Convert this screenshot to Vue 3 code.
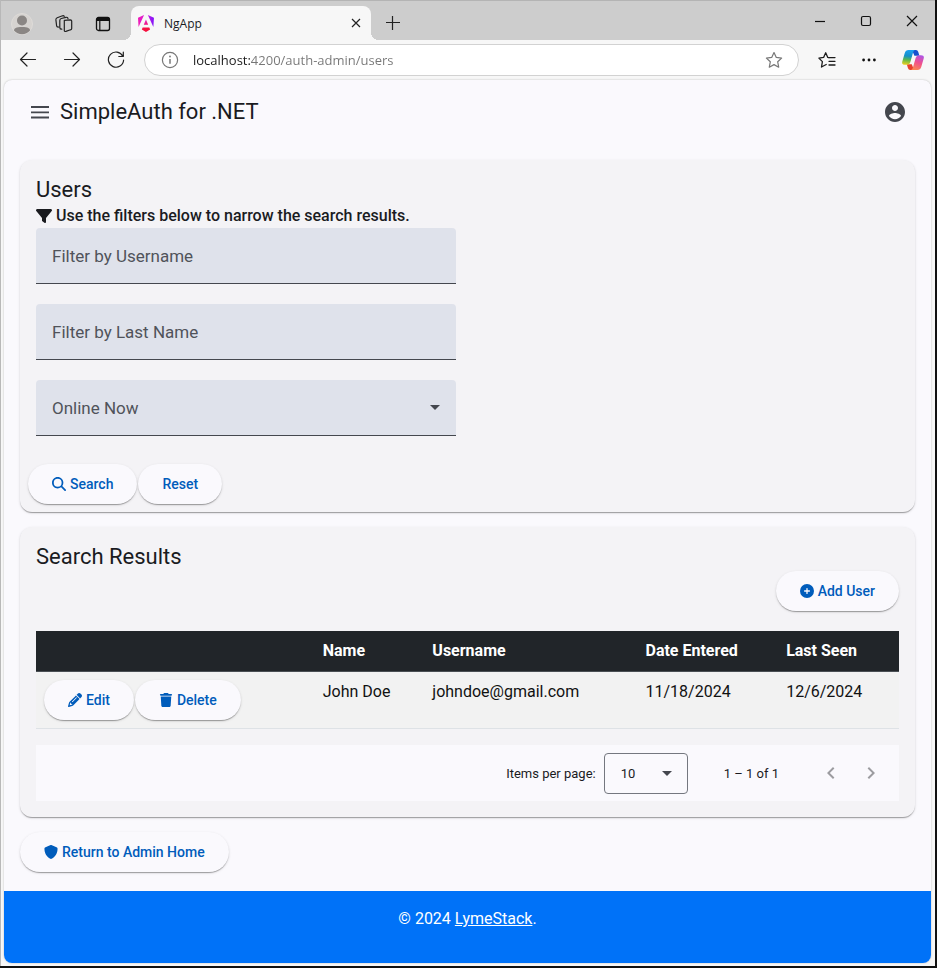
<script setup>
import { ref } from 'vue'

const url = ref('localhost:4200/auth-admin/users')
const username = ref('')
const lastName = ref('')
const online = ref('')
const pageSize = ref(10)

const users = [
  { name: 'John Doe', username: 'johndoe@gmail.com', entered: '11/18/2024', seen: '12/6/2024' },
]

function reset() {
  username.value = ''
  lastName.value = ''
  online.value = ''
}
</script>

<template>
  <div class="window">
    <header class="tabstrip">
      <div class="strip-tools">
        <button class="chrome-btn" aria-label="Profile">
          <svg width="22" height="22" viewBox="0 0 22 22">
            <circle cx="11" cy="11" r="10.5" fill="#d6d3d0" stroke="#dedbd8" />
            <circle cx="11" cy="7.5" r="5" fill="#8a8684" />
            <path d="M3 17.5c0-2.4 2-3.6 8-3.6s8 1.200 8 3.600a10.500 10.500 0 0 1-16 0z" fill="#8a8684" />
          </svg>
        </button>
        <button class="chrome-btn" aria-label="Workspaces">
          <svg width="18" height="18" viewBox="0 0 18 18" fill="none" stroke="#222" stroke-width="1.200" stroke-linejoin="round" stroke-linecap="round">
            <path d="M9.300 5.300l6-.5q1.400 0 1.400 1.300v7.400q0 1.100-1.200 1.300l-4.600 1.600q-1.600.4-1.600-1.200V6.600q0-1.100 0-1.300z" />
            <path d="M6.800 14.200q-1.900.1-2-1.600V5.500q0-1.600 1.400-2L11 2.300q1.800-.3 2 1.300" />
            <path d="M3.800 12q-1.900.3-2.200-1.200L.9 4.900Q.8 3.300 2.200 2.700L7.500.8q1.200-.3 1.800.5" />
          </svg>
        </button>
        <button class="chrome-btn" aria-label="Tab actions">
          <svg width="16" height="16" viewBox="0 0 16 16">
            <rect x="1.500" y="1.500" width="13" height="13" rx="2" fill="none" stroke="#111" stroke-width="1.300" />
            <path d="M1.500 5V3.200q0-1.700 1.700-1.700h9.600q1.700 0 1.700 1.700V5z" fill="#111" />
            <path d="M4.800 5v9.500" stroke="#111" stroke-width="1.200" />
          </svg>
        </button>
      </div>
      <div class="tab">
        <svg width="16" height="17" viewBox="0 0 223 236">
          <defs>
            <linearGradient id="ng" x1="0" y1="60" x2="223" y2="60" gradientUnits="userSpaceOnUse">
              <stop offset="0" stop-color="#f01bb4" />
              <stop offset=".55" stop-color="#d11fe0" />
              <stop offset="1" stop-color="#7a12fb" />
            </linearGradient>
            <linearGradient id="ngb" x1="60" y1="0" x2="120" y2="236" gradientUnits="userSpaceOnUse">
              <stop offset=".3" stop-color="#e81ccf" />
              <stop offset=".8" stop-color="#f5103e" />
            </linearGradient>
          </defs>
          <path fill="url(#ng)" d="m222.077 39.192-8.019 125.923L137.387 0l84.690 39.192ZM7.937 165.115 0 39.192 84.690 0 7.937 165.115Z" />
          <path fill="url(#ngb)" d="m168.972 202.017-57.933 33.056-57.934-33.056 11.783-28.556h92.301l11.783 28.556ZM111.039 62.675l30.357 73.803H80.681l30.358-73.803Z" />
        </svg>
        <span class="tab-title">NgApp</span>
        <button class="tab-close" aria-label="Close tab">
          <svg width="10" height="10" viewBox="0 0 10 10" stroke="#222" stroke-width="1.200"><path d="M1 1l8 8M9 1l-8 8" /></svg>
        </button>
      </div>
      <button class="new-tab" aria-label="New tab">
        <svg width="14" height="14" viewBox="0 0 14 14" stroke="#222" stroke-width="1.200"><path d="M6.500 0v14M0 6.500h14" /></svg>
      </button>
      <div class="win-buttons">
        <button aria-label="Minimize">
          <svg width="12" height="12" viewBox="0 0 12 12" stroke="#111" stroke-width="1.200"><path d="M1 6.500h10" /></svg>
        </button>
        <button aria-label="Maximize">
          <svg width="12" height="12" viewBox="0 0 12 12" stroke="#111" stroke-width="1.200" fill="none"><rect x="1.500" y="1.500" width="9" height="9" rx="1.500" /></svg>
        </button>
        <button aria-label="Close">
          <svg width="12" height="12" viewBox="0 0 12 12" stroke="#111" stroke-width="1.200"><path d="M1 1l10 10M11 1L1 11" /></svg>
        </button>
      </div>
    </header>

    <nav class="toolbar">
      <button class="nav-btn" aria-label="Back">
        <svg width="18" height="16" viewBox="0 0 18 16" fill="none" stroke="#222" stroke-width="1.200" stroke-linecap="round" stroke-linejoin="round"><path d="M16.500 7.500H1.500M8 1L1.500 7.500 8 14" /></svg>
      </button>
      <button class="nav-btn" aria-label="Forward">
        <svg width="18" height="16" viewBox="0 0 18 16" fill="none" stroke="#222" stroke-width="1.200" stroke-linecap="round" stroke-linejoin="round"><path d="M1.500 7.500h15M10 1l6.500 6.500L10 14" /></svg>
      </button>
      <button class="nav-btn" aria-label="Refresh">
        <svg width="18" height="18" viewBox="0 0 18 18" fill="none" stroke="#222" stroke-width="1.200" stroke-linecap="round" stroke-linejoin="round"><path d="M15.800 5.200A7.600 7.600 0 1 0 16.600 9M16.300 1v4.500h-4.500" /></svg>
      </button>
      <div class="address">
        <svg width="18" height="18" viewBox="0 0 18 18" fill="none" stroke="#777" stroke-width="1.200"><circle cx="9" cy="9" r="7.600" /><path d="M9 8v4.800" stroke-width="1.500" /><circle cx="9" cy="5.500" r=".9" fill="#777" stroke="none" /></svg>
        <input v-model="url" class="url" type="text" aria-label="Address" />
        <button class="chrome-btn" aria-label="Add to favorites">
          <svg width="18" height="18" viewBox="0 0 18 18" fill="none" stroke="#777" stroke-width="1.200" stroke-linejoin="round"><path d="M9 1.500l2.300 4.900 5.300.7-3.900 3.700 1 5.400L9 13.600l-4.700 2.600 1-5.400L1.400 7.100l5.300-.7z" /></svg>
        </button>
      </div>
      <div class="tool-right">
        <button class="chrome-btn" aria-label="Favorites">
          <svg width="18" height="18" viewBox="0 0 18 18" fill="none" stroke="#1b1b1b" stroke-width="1.300" stroke-linejoin="round" stroke-linecap="round"><path d="M10.800 6.600l-1-.2L7.700 1.800 5.600 6.400l-4.700.7 3.500 3.500-.9 5.400 4.700-2.500" /><path d="M11 6.600h6M11 10.300h6M11 14h6" /></svg>
        </button>
        <button class="chrome-btn" aria-label="Settings and more">
          <svg width="16" height="4" viewBox="0 0 16 4" fill="#111"><circle cx="2.600" cy="2" r="1.400" /><circle cx="8" cy="2" r="1.400" /><circle cx="13.400" cy="2" r="1.400" /></svg>
        </button>
        <button class="chrome-btn" aria-label="Copilot">
          <svg width="22" height="20" viewBox="0 0 22 20">
            <defs>
              <linearGradient id="cpa" x1="6" y1="0" x2="4" y2="15" gradientUnits="userSpaceOnUse">
                <stop offset="0" stop-color="#1c9ff0" />
                <stop offset=".4" stop-color="#1590c8" />
                <stop offset=".65" stop-color="#5cb84c" />
                <stop offset="1" stop-color="#f4cf1c" />
              </linearGradient>
              <linearGradient id="cpb" x1="18" y1="4" x2="12" y2="20" gradientUnits="userSpaceOnUse">
                <stop offset="0" stop-color="#a656f0" />
                <stop offset=".5" stop-color="#f0508e" />
                <stop offset="1" stop-color="#fb8b50" />
              </linearGradient>
            </defs>
            <path d="M10 0h4q1.700 0 2.200 1.700l1.200 4h-5z" fill="#1550ce" />
            <path d="M12 20H8.200q-1.700 0-2.200-1.700l-1.200-4h5z" fill="#e8402c" />
            <path d="M6.500 0h6.700q-1.400.2-2 2L8.300 12.200Q7.600 14.800 5 14.800H3Q-.6 14.800.3 11.500L2.700 3.300Q3.700 0 6.500 0z" fill="url(#cpa)" />
            <path d="M15.500 20H9q1.300-.3 1.800-2l2.900-10.300q.7-2.500 3.300-2.500h2q3.600 0 2.700 3.300l-2.400 8.200Q18.300 20 15.500 20z" fill="url(#cpb)" />
          </svg>
        </button>
      </div>
    </nav>

    <div class="page">
      <header class="app-bar">
        <button class="icon-btn" aria-label="Menu">
          <svg width="24" height="24" viewBox="0 0 24 24" stroke="#44474e" stroke-width="1.800"><path d="M3 7h18M3 12.300h18M3 17.500h18" /></svg>
        </button>
        <h1>SimpleAuth for .NET</h1>
        <button class="icon-btn account" aria-label="Account">
          <svg width="24" height="24" viewBox="0 0 24 24" fill="#44474e"><path d="M12 2C6.480 2 2 6.480 2 12s4.480 10 10 10 10-4.480 10-10S17.520 2 12 2zm0 3c1.660 0 3 1.340 3 3s-1.340 3-3 3-3-1.340-3-3 1.340-3 3-3zm0 14.200c-2.500 0-4.710-1.280-6-3.220.03-1.990 4-3.080 6-3.080 1.990 0 5.970 1.090 6 3.080-1.290 1.940-3.500 3.220-6 3.220z" /></svg>
        </button>
      </header>

      <main>
        <section class="card filters">
          <h2>Users</h2>
          <p class="hint">
            <svg width="16" height="16" viewBox="0 0 512 512" fill="#1a1b1f"><path d="M3.900 54.900C10.500 40.900 24.500 32 40 32H472c15.500 0 29.500 8.900 36.100 22.900s4.600 30.500-5.200 42.500L320 320.900V448c0 12.100-6.800 23.200-17.700 28.600s-23.800 4.300-33.500-3l-64-48c-8.100-6-12.800-15.500-12.800-25.600V320.900L9 97.300C-.7 85.400-2.800 68.800 3.900 54.900z" /></svg>
            <span>Use the filters below to narrow the search results.</span>
          </p>
          <form @submit.prevent>
            <div class="fields">
              <div class="field">
                <input id="username" v-model="username" type="text" placeholder=" " />
                <label for="username">Filter by Username</label>
              </div>
              <div class="field">
                <input id="lastname" v-model="lastName" type="text" placeholder=" " />
                <label for="lastname">Filter by Last Name</label>
              </div>
              <div class="field" :class="{ filled: online }">
                <select id="online" v-model="online">
                  <option value=""></option>
                  <option value="yes">Yes</option>
                  <option value="no">No</option>
                </select>
                <label for="online">Online Now</label>
                <svg class="arrow" width="10" height="5" viewBox="0 0 10 5"><path d="M0 0l5 5 5-5z" /></svg>
              </div>
            </div>
            <div class="actions">
              <button class="pill" type="submit">
                <svg width="14" height="14" viewBox="0 0 512 512"><path d="M416 208c0 45.900-14.900 88.300-40 122.700L502.600 457.400c12.500 12.500 12.500 32.800 0 45.300s-32.800 12.500-45.300 0L330.700 376c-34.400 25.200-76.800 40-122.700 40C93.100 416 0 322.900 0 208S93.100 0 208 0S416 93.100 416 208zM208 352a144 144 0 1 0 0-288 144 144 0 1 0 0 288z" /></svg>
                Search
              </button>
              <button class="pill" type="button" @click="reset">Reset</button>
            </div>
          </form>
        </section>

        <section class="card results">
          <h2>Search Results</h2>
          <div class="add">
            <button class="pill">
              <svg width="14" height="14" viewBox="0 0 512 512"><path d="M256 512A256 256 0 1 0 256 0a256 256 0 1 0 0 512zM232 344V280H168c-13.300 0-24-10.700-24-24s10.700-24 24-24h64V168c0-13.300 10.700-24 24-24s24 10.700 24 24v64h64c13.300 0 24 10.700 24 24s-10.700 24-24 24H280v64c0 13.300-10.700 24-24 24s-24-10.700-24-24z" /></svg>
              Add User
            </button>
          </div>
          <table>
            <colgroup>
              <col class="c-actions" />
              <col class="c-name" />
              <col class="c-username" />
              <col class="c-entered" />
              <col class="c-seen" />
            </colgroup>
            <thead>
              <tr>
                <th></th>
                <th>Name</th>
                <th>Username</th>
                <th>Date Entered</th>
                <th>Last Seen</th>
              </tr>
            </thead>
            <tbody>
              <tr v-for="u in users" :key="u.username">
                <td>
                  <div class="row-actions">
                    <button class="pill">
                      <svg width="14" height="14" viewBox="0 0 512 512"><path d="M410.300 231l11.300-11.300-33.900-33.900-62.100-62.100L291.700 89.800l-11.300 11.300-22.600 22.600L58.600 322.900c-10.400 10.400-18 23.300-22.200 37.400L1 480.700c-2.500 8.400-.2 17.500 6.100 23.700s15.300 8.500 23.700 6.100l120.300-35.400c14.100-4.200 27-11.800 37.400-22.200L387.700 253.700 410.300 231zM160 399.400l-9.100 22.700c-4 3.100-8.500 5.400-13.300 6.900L59.400 452l23-78.100c1.400-4.900 3.800-9.400 6.900-13.300l22.700-9.100v32c0 8.800 7.200 16 16 16h32zM362.700 18.700L348.300 33.200 325.700 55.800 314.300 67.100l33.900 33.900 62.100 62.100 33.900 33.900 11.300-11.300 22.600-22.600 14.500-14.500c25-25 25-65.500 0-90.500L453.300 18.700c-25-25-65.500-25-90.500 0zm-47.400 168l-144 144c-6.200 6.200-16.400 6.200-22.600 0s-6.200-16.400 0-22.600l144-144c6.200-6.200 16.400-6.200 22.600 0s6.200 16.400 0 22.600z" /></svg>
                      Edit
                    </button>
                    <button class="pill">
                      <svg width="14" height="14" viewBox="-32 0 512 512"><path d="M135.200 17.700L128 32H32C14.300 32 0 46.300 0 64S14.300 96 32 96H416c17.700 0 32-14.300 32-32s-14.300-32-32-32H320l-7.200-14.300C307.400 6.800 296.300 0 284.200 0H163.800c-12.100 0-23.200 6.800-28.600 17.700zM416 128H32L53.200 467c1.600 25.300 22.600 45 47.900 45H346.900c25.300 0 46.300-19.700 47.900-45L416 128z" /></svg>
                      Delete
                    </button>
                  </div>
                </td>
                <td>{{ u.name }}</td>
                <td>{{ u.username }}</td>
                <td>{{ u.entered }}</td>
                <td>{{ u.seen }}</td>
              </tr>
            </tbody>
          </table>
          <div class="paginator">
            <label for="page-size">Items per page:</label>
            <div class="size">
              <select id="page-size" v-model="pageSize">
                <option :value="10">10</option>
                <option :value="25">25</option>
                <option :value="50">50</option>
              </select>
              <svg class="arrow" width="10" height="5" viewBox="0 0 10 5"><path d="M0 0l5 5 5-5z" /></svg>
            </div>
            <span class="range">1 – 1 of 1</span>
            <button class="page-btn" aria-label="Previous page" disabled>
              <svg width="24" height="24" viewBox="0 0 24 24"><path d="M15.410 7.410L14 6l-6 6 6 6 1.410-1.410L10.830 12z" /></svg>
            </button>
            <button class="page-btn" aria-label="Next page" disabled>
              <svg width="24" height="24" viewBox="0 0 24 24"><path d="M10 6L8.590 7.410 13.170 12l-4.580 4.590L10 18l6-6z" /></svg>
            </button>
          </div>
        </section>

        <button class="pill home">
          <svg width="14" height="14" viewBox="0 0 512 512"><path d="M256 0c4.600 0 9.200 1 13.400 2.900L457.700 82.800c22 9.300 38.400 31 38.300 57.200c-.5 99.200-41.300 280.700-213.600 363.200c-16.700 8-36.100 8-52.800 0C57.300 420.700 16.500 239.200 16 140c-.1-26.200 16.300-47.900 38.300-57.200L242.700 2.900C246.800 1 251.400 0 256 0z" /></svg>
          Return to Admin Home
        </button>
      </main>

      <footer>© 2024 <a href="#">LymeStack</a>.</footer>
    </div>
  </div>
</template>

<style>
body {
  background: #111;
}
</style>

<style scoped>
.window,
.window * {
  box-sizing: border-box;
}
.window {
  display: flex;
  flex-direction: column;
  min-height: calc(100vh - 2px);
  margin: 0 2px 2px 0;
  border-left: 1px solid #b8b8b8;
  background: #f7f7f7;
  font-family: Roboto, sans-serif;
  color: #1a1b1f;
}
button {
  margin: 0;
  padding: 0;
  border: 0;
  background: none;
  font: inherit;
  color: inherit;
  cursor: pointer;
}
svg {
  display: block;
  flex: none;
}
h1,
h2,
p {
  margin: 0;
}
h1,
h2 {
  font-size: 22px;
  line-height: 28px;
  font-weight: 400;
}

/* Tab strip */
.tabstrip {
  display: flex;
  height: 40px;
  border-top: 1px solid #b4b4b4;
  background: #cdcdcd;
}
.strip-tools {
  display: flex;
  align-items: center;
  gap: 22px;
  width: 130px;
  padding: 6px 0 0 10px;
}
.chrome-btn {
  display: grid;
  place-items: center;
}
.tab {
  position: relative;
  display: flex;
  align-items: center;
  gap: 10px;
  width: 240px;
  margin-top: 5px;
  padding: 0 10px 0 7px;
  border-radius: 8px 8px 0 0;
  background: #f7f7f7;
}
.tab::before,
.tab::after {
  content: '';
  position: absolute;
  bottom: 0;
  width: 8px;
  height: 8px;
}
.tab::before {
  left: -8px;
  background: radial-gradient(circle at 0 0, #cdcdcd 8px, #f7f7f7 8px);
}
.tab::after {
  right: -8px;
  background: radial-gradient(circle at 100% 0, #cdcdcd 8px, #f7f7f7 8px);
}
.tab-title {
  flex: 1;
  font: 12px 'Open Sans', sans-serif;
}
.new-tab {
  padding: 5px 15px 0;
}
.win-buttons {
  display: flex;
  margin-left: auto;
}
.win-buttons button {
  display: grid;
  place-items: center;
  width: 46px;
}

/* Toolbar */
.toolbar {
  display: flex;
  align-items: center;
  height: 40px;
  padding: 0 11px 0 5px;
}
.nav-btn {
  display: grid;
  place-items: center;
  width: 44px;
  height: 32px;
}
.address {
  display: flex;
  flex: 1;
  align-items: center;
  gap: 14px;
  height: 32px;
  margin-left: 6px;
  padding: 0 15px 0 16px;
  border: 1px solid #d2d2d2;
  border-radius: 16px;
  background: #fff;
}
.url {
  flex: 1;
  min-width: 0;
  padding: 0;
  border: 0;
  outline: 0;
  font: 13px 'Open Sans', sans-serif;
  background: linear-gradient(90deg, #1b1b1b 57px, #767676 57px);
  background-clip: text;
  -webkit-background-clip: text;
  -webkit-text-fill-color: transparent;
  caret-color: #1b1b1b;
}
.tool-right {
  display: flex;
  align-items: center;
  justify-content: space-between;
  width: 106px;
  margin-left: 19px;
}

/* Application page */
.page {
  display: flex;
  flex: 1;
  flex-direction: column;
  margin: 0 4px 3px 3px;
  border-radius: 8px;
  background: #faf9fd;
  box-shadow: 0 0 2px rgba(0, 0, 0, 0.25);
  overflow: hidden;
}
.app-bar {
  display: flex;
  align-items: center;
  gap: 8px;
  height: 64px;
  padding: 0 24px;
}
.account {
  margin-left: auto;
}
main {
  display: flex;
  flex: 1;
  flex-direction: column;
  gap: 15px;
  padding: 16px;
}
.card {
  padding: 16px;
  border-radius: 12px;
  background: #f4f3f6;
  box-shadow: 0 2px 1px -1px rgba(0, 0, 0, 0.2), 0 1px 1px rgba(0, 0, 0, 0.14), 0 1px 3px rgba(0, 0, 0, 0.12);
}
.filters {
  padding-bottom: 8px;
}
.hint {
  display: flex;
  align-items: center;
  gap: 4px;
  font-size: 16px;
  line-height: 24px;
  font-weight: 500;
}
.fields {
  display: grid;
  gap: 20px;
  max-width: 420px;
}
.field {
  display: grid;
  align-items: center;
  height: 56px;
  border-bottom: 1px solid #44474e;
  border-radius: 4px 4px 0 0;
  background: #dfe2eb;
}
.field > * {
  grid-area: 1 / 1;
}
.field input,
.field select {
  width: 100%;
  height: 55px;
  padding: 20px 16px 0;
  border: 0;
  outline: 0;
  background: none;
  appearance: none;
  font: 16px Roboto, sans-serif;
  color: #1a1b1f;
}
.field label {
  padding-left: 16px;
  font-size: 17px;
  line-height: 24px;
  color: #50535a;
  pointer-events: none;
}
.field input:focus + label,
.field input:not(:placeholder-shown) + label,
.field.filled label {
  align-self: start;
  font-size: 12px;
}
.arrow {
  justify-self: end;
  margin-right: 16px;
  fill: #44474e;
  pointer-events: none;
}
.actions {
  display: flex;
  gap: 1px;
  margin: 28px 0 0 -8px;
}
.pill {
  display: flex;
  align-items: center;
  gap: 4px;
  height: 40px;
  padding: 0 24px;
  border-radius: 20px;
  background: #faf9fd;
  box-shadow: 0 2px 1px -1px rgba(0, 0, 0, 0.2), 0 1px 1px rgba(0, 0, 0, 0.14), 0 1px 3px rgba(0, 0, 0, 0.12);
  font-size: 14px;
  line-height: 20px;
  font-weight: 500;
  color: #005cbb;
  white-space: nowrap;
}
.pill svg {
  fill: #005cbb;
}
.add {
  display: flex;
  justify-content: flex-end;
  margin-bottom: 20px;
}
table {
  width: 100%;
  table-layout: fixed;
  border-collapse: separate;
  border-spacing: 0;
  font-size: 16px;
  line-height: 24px;
}
.c-actions {
  width: 32.3%;
}
.c-name {
  width: 12.7%;
}
.c-username {
  width: 24.7%;
}
.c-entered {
  width: 16.3%;
}
th,
td {
  padding: 8px;
  border-bottom: 1px solid #dee2e6;
  text-align: left;
  vertical-align: top;
}
th {
  border-bottom-color: #4a4f54;
  background: #212529;
  font-weight: 700;
  color: #fff;
}
td {
  background: #f2f2f2;
  color: #111;
}
.row-actions {
  display: flex;
  gap: 1px;
}
.paginator {
  display: flex;
  align-items: center;
  justify-content: flex-end;
  height: 56px;
  margin-top: 16px;
  padding-right: 8px;
  background: #faf9fd;
  font-size: 13px;
}
.size {
  display: grid;
  align-items: center;
  width: 84px;
  margin: 0 36px 0 8px;
}
.size > * {
  grid-area: 1 / 1;
}
.size select {
  width: 100%;
  height: 41px;
  padding: 0 16px;
  border: 1px solid #74777f;
  border-radius: 4px;
  background: none;
  appearance: none;
  font: 13px Roboto, sans-serif;
  color: #1a1b1f;
}
.range {
  margin-right: 32px;
}
.page-btn {
  display: grid;
  place-items: center;
  width: 40px;
  height: 40px;
}
.page-btn svg {
  fill: #9c9ca0;
}
.home {
  align-self: flex-start;
}
footer {
  height: 72px;
  padding-top: 16px;
  background: #0072f8;
  font-size: 16px;
  line-height: 24px;
  text-align: center;
  color: #fff;
}
footer a {
  color: inherit;
}
</style>
